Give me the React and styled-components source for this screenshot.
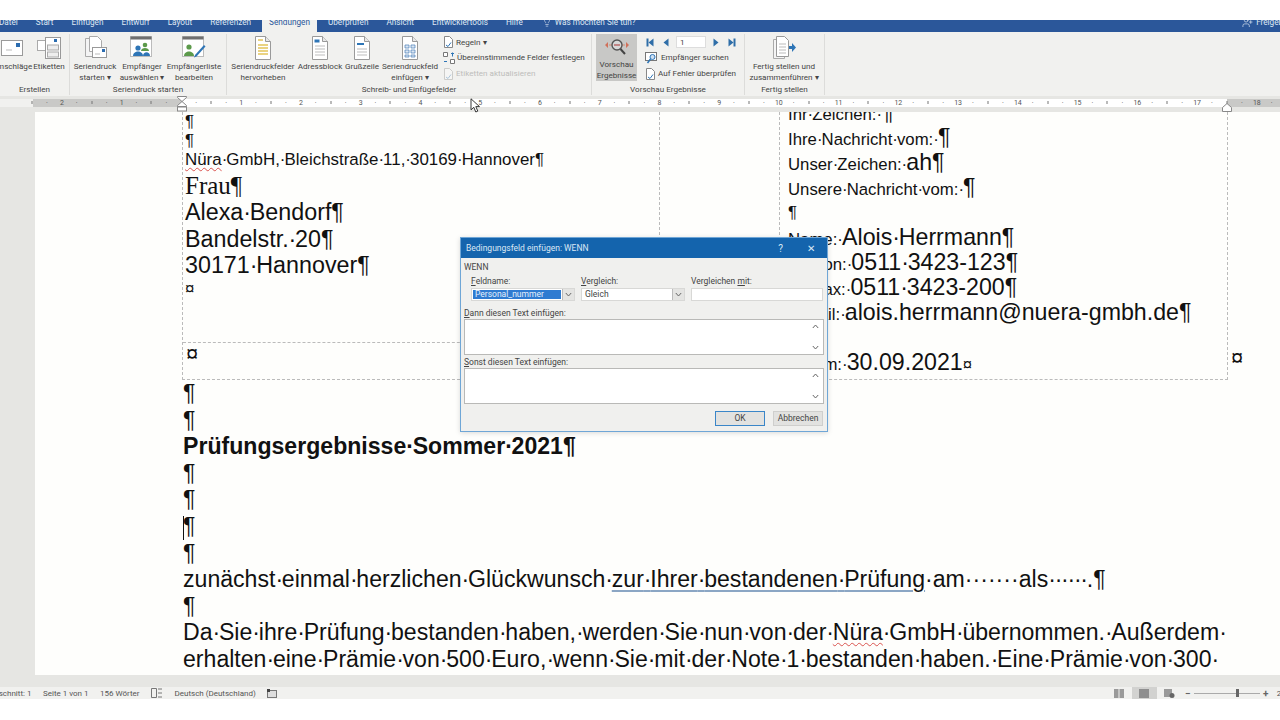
import styled, { createGlobalStyle } from 'styled-components';
import { Lightbulb, UserPlus } from 'lucide-react';

const GlobalStyle = createGlobalStyle`
  html, body { margin: 0; padding: 0; background: #fff; }
  #root { width: 1280px; height: 720px; overflow: hidden; }
`;

const uiFont = `Roboto, "Noto Sans", sans-serif`;
const docFont = `"Liberation Sans", Arial, sans-serif`;

const Sheet = ({ w = 18, h = 24, lines = 3, children }) => (
  <svg width={w} height={h} viewBox="0 0 18 24">
    <path d="M1.5 .5h10l5 5v18h-15z" fill="#fff" stroke="#9a9a9a" />
    <path d="M11.5 .5v5h5" fill="#e8e8e8" stroke="#9a9a9a" />
    {Array.from({ length: lines }).map((_, i) => (
      <path key={i} d={`M4 ${10 + i * 3}h10`} stroke="#bdbdbd" />
    ))}
    {children}
  </svg>
);

const EnvelopeIcon = () => (
  <svg width="22" height="16" viewBox="0 0 22 16">
    <rect x=".5" y=".5" width="21" height="15" fill="#fff" stroke="#9a9a9a" />
    <path d="M5 10h6" stroke="#bbb" />
    <rect x="15" y="3" width="4" height="4" fill="#2b6cb0" />
  </svg>
);

const LabelsIcon = () => (
  <svg width="24" height="22" viewBox="0 0 24 22">
    <rect x=".5" y="3.500" width="14" height="10" fill="#fff" stroke="#aaa" />
    <rect x="8.500" y=".5" width="15" height="21" fill="#fff" stroke="#999" />
    <rect x="17" y="2" width="3" height="3" fill="#2b6cb0" />
    <rect x="10.500" y="8" width="11" height="5" fill="#eee" stroke="#aaa" />
    <rect x="10.500" y="15" width="11" height="5" fill="#eee" stroke="#aaa" />
  </svg>
);

const MergeIcon = () => (
  <svg width="24" height="24" viewBox="0 0 24 24">
    <path d="M2.500 2.500h8l4 4v14h-12z" fill="#f4f4f4" stroke="#aaa" />
    <path d="M6.500 .5h8l4 4v11h-12z" fill="#fff" stroke="#aaa" />
    <rect x="9.500" y="11.500" width="14" height="10" fill="#fff" stroke="#999" />
    <rect x="19" y="13" width="3" height="3" fill="#2b6cb0" />
    <path d="M12 18h5" stroke="#bbb" />
  </svg>
);

const PeopleIcon = ({ pen }) => (
  <svg width="24" height="24" viewBox="0 0 24 24">
    <rect x=".5" y=".5" width="21" height="20" fill="#fff" stroke="#bbb" />
    <rect x=".5" y=".5" width="21" height="3" fill="#6f6f6f" />
    {pen ? (
      <>
        <circle cx="7" cy="11" r="2.600" fill="#5c9a4b" />
        <path d="M2 20c0-6 10-6 10 0z" fill="#5c9a4b" />
        <path d="M13 19l9-10 1.500 1.500-9 10-2.500 1z" fill="#2e75b6" />
      </>
    ) : (
      <>
        <circle cx="15" cy="9" r="2.300" fill="#5c9a4b" />
        <path d="M11 15c0-4 8-4 8 0z" fill="#5c9a4b" />
        <circle cx="8" cy="12" r="2.600" fill="#2e75b6" />
        <path d="M3 20c0-6 10-6 10 0z" fill="#2e75b6" />
        <path d="M13 20c0-5 7-5 7 0z" fill="#2e75b6" />
      </>
    )}
  </svg>
);

const HighlightIcon = () => (
  <Sheet lines={0}>
    <path d="M4 4h5M4 9h10M4 12h10M4 15h10M4 18h10" stroke="#e3c55a" strokeWidth="1.500" />
  </Sheet>
);

const BlockIcon = () => (
  <Sheet lines={4}>
    <path d="M3.500 3.500h5v3h-5z" fill="#2e75b6" />
  </Sheet>
);

const GreetingIcon = () => (
  <Sheet lines={0}>
    <path d="M4 8h7" stroke="#2e75b6" strokeWidth="2" />
    <path d="M4 13h10M4 16h10M4 19h10" stroke="#bdbdbd" />
  </Sheet>
);

const FieldIcon = () => (
  <Sheet lines={0}>
    <path d="M4 9h4v3h-4zM10 9h4v3h-4zM4 14h4v3h-4zM10 14h4v3h-4zM4 19h4v2h-4zM10 19h4v2h-4z" fill="#dbe6f3" stroke="#4b7fb8" strokeWidth=".7" />
  </Sheet>
);

const FinishIcon = () => (
  <svg width="24" height="24" viewBox="0 0 24 24">
    <path d="M1.500 3.500h8l3 3v16h-11z" fill="#f4f4f4" stroke="#aaa" />
    <path d="M4.500 .5h8l4 4v16h-12z" fill="#fff" stroke="#999" />
    <path d="M7 8h7M7 11h7M7 14h7M7 17h7" stroke="#bbb" />
    <path d="M17 10h3V7l4 4.500-4 4.500v-3h-3z" fill="#2e75b6" />
  </svg>
);

const PreviewIcon = () => (
  <svg width="26" height="18" viewBox="0 0 26 18">
    <path d="M1 7l3-3v6zM25 7l-3-3v6z" fill="#d0705a" />
    <path d="M5 7h3M18 7h3" stroke="#d0a090" strokeWidth="1.500" />
    <circle cx="13" cy="7" r="5" fill="#d8d8d8" stroke="#555" strokeWidth="1.400" />
    <path d="M10 7h6" stroke="#a33" />
    <path d="M16.500 11l4.500 5" stroke="#444" strokeWidth="2" />
  </svg>
);

const SmallDoc = ({ mark, faded }) => (
  <svg width="11" height="12" viewBox="0 0 11 12" opacity={faded ? 0.35 : 1}>
    <path d="M1.500 .5h5l3 3v8h-8z" fill="#fff" stroke="#888" />
    <path d="M3 9l2 1.500 3-4" fill="none" stroke={mark} />
  </svg>
);

const MatchIcon = () => (
  <svg width="12" height="12" viewBox="0 0 12 12">
    <path d="M.5 .5h4v4h-4zM7.500 7.500h4v4h-4z" fill="#fff" stroke="#777" />
    <path d="M8 1.500h3M9.500 .5v4M1 9.500h3" stroke="#2e75b6" />
  </svg>
);

const FindIcon = () => (
  <svg width="14" height="12" viewBox="0 0 14 12">
    <rect x=".5" y=".5" width="11" height="8" fill="#fff" stroke="#777" />
    <circle cx="7.500" cy="5" r="2.500" fill="#cfe0f2" stroke="#2e75b6" />
    <path d="M5.500 7l-3 4" stroke="#2e75b6" strokeWidth="1.500" />
  </svg>
);

const NavIcon = ({ dir, bar }) => (
  <svg width="9" height="9" viewBox="0 0 9 9">
    <path d={dir === 'left' ? 'M7.500 .5v8l-5-4z' : 'M1.500 .5v8l5-4z'} fill="#2f6ea8" />
    {bar && <path d={dir === 'left' ? 'M.5 .5h2v8h-2z' : 'M6.500 .5h2v8h-2z'} fill="#2f6ea8" />}
  </svg>
);

const Chevron = ({ up }) => (
  <svg width="7" height="5" viewBox="0 0 7 5">
    <path d={up ? 'M.8 4l2.700-3 2.700 3' : 'M.8 1l2.700 3 2.700-3'} fill="none" stroke="#666" />
  </svg>
);

// Word draws the space marker narrower than a real middle dot
const Tx = ({ children }) =>
  children.split('·').flatMap((part, i) => (i === 0 ? [part] : [<Dot key={i}>·</Dot>, part]));

const tabs = ['Datei', 'Start', 'Einfügen', 'Entwurf', 'Layout', 'Referenzen', 'Sendungen', 'Überprüfen', 'Ansicht', 'Entwicklertools', 'Hilfe'];

const rulerMarks = ['bar', 'dot', '2', 'dot', 'bar', 'dot', '1', 'dot', 'bar', 'dot', ''];
for (let n = 1; n <= 19; n += 1) rulerMarks.push('dot', 'bar', 'dot', String(n));

const App = () => (
  <>
    <GlobalStyle />
    <Screen>
      <TopGap />
      <TabBar>
        <TabList>
          {tabs.map((t) => (
            <Tab key={t} $active={t === 'Sendungen'}>{t}</Tab>
          ))}
          <TellMe>
            <Lightbulb size={10} strokeWidth={1.5} />
            Was möchten Sie tun?
          </TellMe>
        </TabList>
        <Share>
          <UserPlus size={11} strokeWidth={1.5} />
          Freigeben
        </Share>
      </TabBar>

      <Ribbon>
        <Group $w={78}>
          <GroupBody>
            <BigButton $w={40}><IconSlot><EnvelopeIcon /></IconSlot><span>Umschläge</span></BigButton>
            <BigButton $w={34}><IconSlot><LabelsIcon /></IconSlot><span>Etiketten</span></BigButton>
          </GroupBody>
          <GroupLabel $shift={8}>Erstellen</GroupLabel>
        </Group>
        <Group $w={157}>
          <GroupBody>
            <BigButton $w={50}><IconSlot><MergeIcon /></IconSlot><span>Seriendruck<br />starten ▾</span></BigButton>
            <BigButton $w={44}><IconSlot><PeopleIcon /></IconSlot><span>Empfänger<br />auswählen ▾</span></BigButton>
            <BigButton $w={60}><IconSlot><PeopleIcon pen /></IconSlot><span>Empfängerliste<br />bearbeiten</span></BigButton>
          </GroupBody>
          <GroupLabel>Seriendruck starten</GroupLabel>
        </Group>
        <Group $w={365}>
          <GroupBody>
            <BigButton $w={72}><IconSlot><HighlightIcon /></IconSlot><span>Seriendruckfelder<br />hervorheben</span></BigButton>
            <BigButton $w={42}><IconSlot><BlockIcon /></IconSlot><span>Adressblock</span></BigButton>
            <BigButton $w={42}><IconSlot><GreetingIcon /></IconSlot><span>Grußzeile</span></BigButton>
            <BigButton $w={54}><IconSlot><FieldIcon /></IconSlot><span>Seriendruckfeld<br />einfügen ▾</span></BigButton>
            <SmallColumn $gap={6}>
              <SmallButton><SmallDoc mark="#2e75b6" />Regeln ▾</SmallButton>
              <SmallButton><MatchIcon />Übereinstimmende Felder festlegen</SmallButton>
              <SmallButton $disabled><SmallDoc mark="#2e75b6" faded />Etiketten aktualisieren</SmallButton>
            </SmallColumn>
          </GroupBody>
          <GroupLabel>Schreib- und Einfügefelder</GroupLabel>
        </Group>
        <Group $w={153}>
          <GroupBody>
            <ActiveButton><IconSlot><PreviewIcon /></IconSlot><span>Vorschau<br />Ergebnisse</span></ActiveButton>
            <SmallColumn $gap={8}>
              <NavRow>
                <NavIcon dir="left" bar />
                <NavIcon dir="left" />
                <NavInput>1</NavInput>
                <NavIcon dir="right" />
                <NavIcon dir="right" bar />
              </NavRow>
              <SmallButton><FindIcon />Empfänger suchen</SmallButton>
              <SmallButton><SmallDoc mark="#2e75b6" />Auf Fehler überprüfen</SmallButton>
            </SmallColumn>
          </GroupBody>
          <GroupLabel>Vorschau Ergebnisse</GroupLabel>
        </Group>
        <Group $w={80}>
          <GroupBody>
            <BigButton $w={78}><IconSlot><FinishIcon /></IconSlot><span>Fertig stellen und<br />zusammenführen ▾</span></BigButton>
          </GroupBody>
          <GroupLabel>Fertig stellen</GroupLabel>
        </Group>
      </Ribbon>

      <Ruler>
        <RulerStrip>
          {rulerMarks.map((m, i) => (
            <RulerMark key={i}>
              {m === 'bar' ? <RulerBar /> : m === 'dot' ? '·' : m}
            </RulerMark>
          ))}
        </RulerStrip>
        <IndentMarker $x={176}>
          <svg width="12" height="16" viewBox="0 0 12 16">
            <path d="M1.500 .5h9v1l-4.500 4-4.500-4zM6 5.500l4.500 4v1h-9v-1z" fill="#fff" stroke="#888" />
            <rect x="1.500" y="11" width="9" height="4" fill="#fff" stroke="#888" />
          </svg>
        </IndentMarker>
        <IndentMarker $x={1221}>
          <svg width="12" height="16" viewBox="0 0 12 16">
            <path d="M1.500 15.500v-4l4.500-4 4.500 4v4z" fill="#fff" stroke="#888" />
          </svg>
        </IndentMarker>
      </Ruler>

      <DocArea>
        <Page>
          <HeaderTable>
            <AddressCell>
              <AddressTop>
                <Line>¶</Line>
                <Line>¶</Line>
                <Line><Misspelled>Nüra</Misspelled><Tx>·GmbH,·Bleichstraße·11,·30169·Hannover¶</Tx></Line>
                <AddressLine $serif $first>Frau¶</AddressLine>
                <AddressLine><Tx>Alexa·Bendorf¶</Tx></AddressLine>
                <AddressLine><Tx>Bandelstr.·20¶</Tx></AddressLine>
                <AddressLine><Tx>30171·Hannover¶</Tx></AddressLine>
                <Line>¤</Line>
              </AddressTop>
              <AddressBottom><CellMark>¤</CellMark></AddressBottom>
            </AddressCell>
            <GapCell />
            <InfoCell>
              <InfoLine><Tx>Ihr·Zeichen:·</Tx><Big>¶</Big></InfoLine>
              <InfoLine><Tx>Ihre·Nachricht·vom:·</Tx><Big>¶</Big></InfoLine>
              <InfoLine><Tx>Unser·Zeichen:·</Tx><Big>ah¶</Big></InfoLine>
              <InfoLine><Tx>Unsere·Nachricht·vom:·</Tx><Big>¶</Big></InfoLine>
              <InfoLine>¶</InfoLine>
              <InfoLine><Tx>Name:·</Tx><Big><Tx>Alois·Herrmann¶</Tx></Big></InfoLine>
              <InfoLine><Tx>Telefon:·</Tx><Big><Tx>0511·3423-123¶</Tx></Big></InfoLine>
              <InfoLine><Tx>Telefax:·</Tx><Big><Tx>0511·3423-200¶</Tx></Big></InfoLine>
              <InfoLine><Tx>E-Mail:·</Tx><Big>alois.herrmann@nuera-gmbh.de¶</Big></InfoLine>
              <InfoLine />
              <InfoLine><Tx>Datum:·</Tx><Big>30.09.2021</Big>¤</InfoLine>
            </InfoCell>
            <RowEnd>¤</RowEnd>
          </HeaderTable>
          <div>
            <BodyLine>¶</BodyLine>
            <BodyLine>¶</BodyLine>
            <BodyLine $bold><Tx>Prüfungsergebnisse·Sommer·2021¶</Tx></BodyLine>
            <BodyLine>¶</BodyLine>
            <BodyLine>¶</BodyLine>
            <BodyLine $caret>¶</BodyLine>
            <BodyLine>¶</BodyLine>
            <BodyLine>
              <Tx>zunächst·einmal·herzlichen·Glückwunsch·</Tx>
              <Grammar><Tx>zur·Ihrer·bestandenen·Prüfung</Tx></Grammar>
              ·am·······als<Tx>······</Tx>.¶
            </BodyLine>
            <BodyLine>¶</BodyLine>
            <BodyLine>
              <Tx>Da·Sie·ihre·Prüfung·bestanden·haben,·werden·Sie·nun·von·der·</Tx>
              <Misspelled>Nüra</Misspelled>
              <Tx>·GmbH·übernommen.·Außerdem·</Tx>
            </BodyLine>
            <BodyLine><Tx>erhalten·eine·Prämie·von·500·Euro,·wenn·Sie·mit·der·Note·1·bestanden·haben.·Eine·Prämie·von·300·</Tx></BodyLine>
          </div>
        </Page>
      </DocArea>

      <StatusBar>
        <StatusLeft>
          <StatusText>Abschnitt: 1</StatusText>
          <StatusText>Seite 1 von 1</StatusText>
          <StatusText>156 Wörter</StatusText>
          <svg width="12" height="10" viewBox="0 0 12 10">
            <path d="M.5.5h5v9h-5zM7 1h4M7 5h4M7 9h4" fill="none" stroke="#777" />
          </svg>
          <StatusText>Deutsch (Deutschland)</StatusText>
          <svg width="10" height="9" viewBox="0 0 10 9">
            <rect x=".5" y="1.500" width="9" height="7" fill="#ddd" stroke="#777" />
            <rect x="0" y="0" width="3" height="3" fill="#444" />
          </svg>
        </StatusLeft>
        <StatusRight>
          <ViewButton>
            <svg width="10" height="9" viewBox="0 0 10 9"><path d="M0 0h4.500v9H0zM5.500 0H10v9H5.500z" fill="#9a9a9a" /></svg>
          </ViewButton>
          <ViewButton $active>
            <svg width="10" height="9" viewBox="0 0 10 9"><rect width="10" height="9" fill="#8f8f8f" /></svg>
          </ViewButton>
          <ViewButton>
            <svg width="11" height="9" viewBox="0 0 11 9"><rect width="8" height="8" fill="#9a9a9a" /><circle cx="8" cy="6.500" r="2.500" fill="#666" /></svg>
          </ViewButton>
          <ZoomSign>−</ZoomSign>
          <ZoomTrack><ZoomThumb /></ZoomTrack>
          <ZoomSign>+</ZoomSign>
          <ZoomValue>204 %</ZoomValue>
        </StatusRight>
      </StatusBar>

      <Dialog>
        <DialogTitle>
          <span>Bedingungsfeld einfügen: WENN</span>
          <DialogControls>
            <span>?</span>
            <span>✕</span>
          </DialogControls>
        </DialogTitle>
        <DialogBody>
          <DialogLabel>WENN</DialogLabel>
          <FieldRow>
            <Field>
              <DialogLabel><u>F</u>eldname:</DialogLabel>
              <Combo>
                <ComboValue $selected>Personal_nummer</ComboValue>
                <ComboArrow><Chevron /></ComboArrow>
              </Combo>
            </Field>
            <Field>
              <DialogLabel><u>V</u>ergleich:</DialogLabel>
              <Combo>
                <ComboValue>Gleich</ComboValue>
                <ComboArrow><Chevron /></ComboArrow>
              </Combo>
            </Field>
            <Field>
              <DialogLabel>Vergleichen <u>m</u>it:</DialogLabel>
              <Combo><ComboValue /></Combo>
            </Field>
          </FieldRow>
          <SectionLabel><u>D</u>ann diesen Text einfügen:</SectionLabel>
          <TextBox>
            <ScrollArrows><Chevron up /><Chevron /></ScrollArrows>
          </TextBox>
          <SectionLabel><u>S</u>onst diesen Text einfügen:</SectionLabel>
          <TextBox>
            <ScrollArrows><Chevron up /><Chevron /></ScrollArrows>
          </TextBox>
          <DialogButtons>
            <DialogButton $primary>OK</DialogButton>
            <DialogButton>Abbrechen</DialogButton>
          </DialogButtons>
        </DialogBody>
      </Dialog>

      <MouseCursor>
        <svg width="11" height="15" viewBox="0 0 11 15">
          <path d="M1 .8v11l2.800-2.500 2 4.700 2-.9-2-4.500h3.700z" fill="#fff" stroke="#222" strokeWidth=".9" />
        </svg>
      </MouseCursor>
    </Screen>
  </>
);

const Screen = styled.div`
  position: relative;
  display: flex;
  flex-direction: column;
  width: 1280px;
  height: 720px;
  overflow: hidden;
  background: #fff;
  font-family: ${uiFont};
`;

const TopGap = styled.div`
  height: 20px;
  flex: none;
`;

const TabBar = styled.div`
  display: flex;
  justify-content: space-between;
  height: 12px;
  flex: none;
  overflow: hidden;
  background: #2b579a;
  color: #dfe7f2;
  font-size: 8.200px;
`;

const TabList = styled.div`
  display: flex;
  height: 12px;
  margin-left: -10px;
`;

const Tab = styled.div`
  height: 12px;
  padding: 0 ${(p) => (p.$active ? '7px' : '9px')};
  margin: 0 ${(p) => (p.$active ? '2px' : '0')};
  line-height: 4px;
  white-space: nowrap;
  background: ${(p) => (p.$active ? '#f1f1ef' : 'transparent')};
  color: ${(p) => (p.$active ? '#2b579a' : 'inherit')};
`;

const TellMe = styled.div`
  display: flex;
  gap: 3px;
  margin-left: 10px;
  line-height: 4px;
  white-space: nowrap;

  svg {
    margin-top: -3px;
  }
`;

const Share = styled.div`
  display: flex;
  gap: 3px;
  margin-right: -12px;
  line-height: 4px;
  white-space: nowrap;

  svg {
    margin-top: -3px;
  }
`;

const Ribbon = styled.div`
  display: flex;
  height: 64px;
  flex: none;
  margin-left: -8px;
  background: #f1f1ef;
  color: #444;
  font-size: 8.100px;
  line-height: 11px;
`;

const Group = styled.div`
  display: flex;
  flex-direction: column;
  flex: 0 0 ${(p) => p.$w}px;
  min-width: 0;
  box-sizing: border-box;
  margin: 2px 0 1px;
  border-right: 1px solid #dcdcda;
`;

const GroupBody = styled.div`
  display: flex;
  flex: 1;
  min-height: 0;
`;

const GroupLabel = styled.div`
  height: 11px;
  padding-left: ${(p) => p.$shift || 0}px;
  text-align: center;
  white-space: nowrap;
`;

const BigButton = styled.div`
  display: flex;
  flex-direction: column;
  align-items: center;
  flex: 0 0 ${(p) => p.$w}px;
  min-width: 0;
  text-align: center;
  white-space: nowrap;
`;

const ActiveButton = styled(BigButton)`
  flex: 0 0 41px;
  height: 47px;
  margin-left: 4px;
  background: #c8c8c6;
`;

const IconSlot = styled.div`
  display: flex;
  align-items: center;
  justify-content: center;
  height: 25px;
  margin: 1px 0;
`;

const SmallColumn = styled.div`
  display: flex;
  flex-direction: column;
  gap: 3.800px;
  margin-left: ${(p) => p.$gap}px;
  padding-top: 2px;
  white-space: nowrap;
`;

const SmallButton = styled.div`
  display: flex;
  align-items: center;
  gap: 2px;
  height: 12px;
  color: ${(p) => (p.$disabled ? '#bdbdbb' : 'inherit')};
`;

const NavRow = styled.div`
  display: flex;
  align-items: center;
  gap: 6px;
  height: 12px;
  padding-left: 1px;
`;

const NavInput = styled.div`
  width: 30px;
  height: 12px;
  padding-left: 3px;
  box-sizing: border-box;
  background: #fff;
  border: 1px solid #ddd;
  line-height: 10px;
`;

const Ruler = styled.div`
  position: relative;
  height: 16px;
  flex: none;
  padding-top: 3px;
  box-sizing: border-box;
  background: #e6e6e3;
`;

const RulerStrip = styled.div`
  display: flex;
  height: 8px;
  overflow: hidden;
  background: linear-gradient(
    to right,
    #f1f1ef 33px,
    #c9c9c7 33px,
    #c9c9c7 182px,
    #fff 182px,
    #fff 1227px,
    #c9c9c7 1227px
  );
  color: #555;
  font-size: 7px;
  line-height: 8px;
`;

const RulerMark = styled.div`
  flex: 0 0 14.940px;
  text-align: center;
  transform: translateX(24.500px);
`;

const RulerBar = styled.i`
  display: inline-block;
  width: 1px;
  height: 3px;
  background: #777;
  vertical-align: 1px;
`;

const IndentMarker = styled.div`
  position: absolute;
  top: 0;
  left: ${(p) => p.$x}px;
  line-height: 0;
`;

const DocArea = styled.div`
  flex: none;
  height: 575px;
  padding-left: 35px;
  box-sizing: border-box;
  background: #e6e6e3;
`;

const Page = styled.div`
  height: 563px;
  padding-left: 148px;
  box-sizing: border-box;
  overflow: hidden;
  background: #fefefc;
  color: #111;
  font-family: ${docFont};
  font-size: 23.100px;
`;

const Dot = styled.span`
  letter-spacing: -0.055em;
`;

const HeaderTable = styled.div`
  display: grid;
  grid-template-columns: 478px 119px 449px 20px;
  height: 268px;
  margin-left: -1px;
`;

const AddressCell = styled.div`
  display: flex;
  flex-direction: column;
  border: 1px dashed #bbb;
  border-width: 0 1px 1px 1px;
`;

const AddressTop = styled.div`
  height: 230px;
  padding-left: 2px;
  border-bottom: 1px dashed #bbb;
`;

const AddressBottom = styled.div`
  padding: 1px 0 0 3px;
`;

const Line = styled.div`
  height: 19px;
  font-size: 16.900px;
  line-height: 19px;
  white-space: nowrap;
`;

const CellMark = styled(Line)`
  font-size: 22px;
`;

const AddressLine = styled.div`
  height: 26.500px;
  margin-top: ${(p) => (p.$first ? '3.500px' : '0')};
  font-family: ${(p) => (p.$serif ? '"Liberation Serif", serif' : docFont)};
  font-size: ${(p) => (p.$serif ? '25px' : '23.300px')};
  line-height: 26.500px;
  white-space: nowrap;
`;

const GapCell = styled.div`
  border-bottom: 1px dashed #bbb;
`;

const InfoCell = styled.div`
  height: 267px;
  padding-left: 8px;
  overflow: hidden;
  border: 1px dashed #bbb;
  border-width: 0 1px 1px 1px;
`;

const InfoLine = styled.div`
  height: 25px;
  font-size: 16.750px;
  line-height: 25px;
  white-space: nowrap;

  &:first-child {
    margin-top: -12.500px;
  }
`;

const Big = styled.span`
  font-size: 23.200px;
`;

const RowEnd = styled.div`
  align-self: end;
  padding: 0 0 13px 3px;
  font-size: 22px;
  line-height: 19px;
`;

const BodyLine = styled.div`
  position: relative;
  height: 26.600px;
  font-weight: ${(p) => (p.$bold ? 700 : 400)};
  line-height: 26.600px;
  white-space: nowrap;

  ${(p) =>
    p.$caret &&
    `&::before {
      content: '';
      position: absolute;
      left: 0;
      top: 3px;
      width: 1px;
      height: 24px;
      background: #111;
    }`}
`;

const Misspelled = styled.span`
  text-decoration: underline wavy #d9534f 1px;
  text-underline-offset: 2px;
`;

const Grammar = styled.span`
  text-decoration: underline #8ba6c4 2px;
  text-underline-offset: 3px;
`;

const StatusBar = styled.div`
  display: flex;
  justify-content: space-between;
  align-items: center;
  flex: none;
  height: 12px;
  background: #f1f1ef;
  color: #555;
  font-size: 8px;
`;

const StatusLeft = styled.div`
  display: flex;
  align-items: center;
  gap: 11.500px;
  margin-left: -11px;
`;

const StatusText = styled.span`
  white-space: nowrap;
`;

const StatusRight = styled.div`
  display: flex;
  align-items: center;
  margin-right: -18px;
`;

const ViewButton = styled.div`
  display: flex;
  align-items: center;
  justify-content: center;
  width: 25px;
  height: 12px;
  background: ${(p) => (p.$active ? '#d2d2d0' : 'transparent')};
`;

const ZoomSign = styled.span`
  width: 12px;
  text-align: center;
  font-size: 10px;
  font-weight: 700;
  color: #666;
`;

const ZoomTrack = styled.div`
  position: relative;
  width: 66px;
  height: 1px;
  background: #aaa;
`;

const ZoomThumb = styled.div`
  position: absolute;
  top: -4px;
  left: 42px;
  width: 3px;
  height: 8px;
  background: #666;
`;

const ZoomValue = styled(StatusText)`
  margin-left: 5px;
`;

const Dialog = styled.div`
  position: absolute;
  top: 237px;
  left: 460px;
  width: 368px;
  box-sizing: border-box;
  background: #f0f0ee;
  border: 1px solid #6fa6d6;
  box-shadow: 0 1px 5px rgba(0, 0, 0, 0.15);
  color: #444;
  font-size: 8.500px;
`;

const DialogTitle = styled.div`
  display: flex;
  justify-content: space-between;
  align-items: center;
  height: 20px;
  padding: 0 12px 0 5px;
  background: #1464ad;
  color: #dbe8f5;
`;

const DialogControls = styled.div`
  display: flex;
  gap: 24px;
  font-size: 10px;
`;

const DialogBody = styled.div`
  display: flex;
  flex-direction: column;
  padding: 4px 3px 5px;
`;

const DialogLabel = styled.div`
  height: 10px;
  line-height: 10px;
  white-space: nowrap;
`;

const FieldRow = styled.div`
  display: grid;
  grid-template-columns: 104px 104px 132px;
  gap: 6px;
  margin: 4px 0 0 7px;
`;

const Field = styled.div`
  display: flex;
  flex-direction: column;
  gap: 2px;
`;

const Combo = styled.div`
  display: flex;
  height: 13px;
  background: #fff;
  border: 1px solid #d8d8d6;
  box-sizing: border-box;
`;

const ComboValue = styled.div`
  flex: 1;
  padding-left: 2px;
  margin: 1px;
  line-height: 9px;
  background: ${(p) => (p.$selected ? '#2f7bd1' : 'transparent')};
  color: ${(p) => (p.$selected ? '#e6f0fb' : 'inherit')};
`;

const ComboArrow = styled.div`
  display: flex;
  align-items: center;
  justify-content: center;
  width: 11px;
  background: #e4e4e2;
  border-left: 1px solid #bbb;
`;

const SectionLabel = styled(DialogLabel)`
  margin-top: 7px;

  & ~ & {
    margin-top: 2px;
  }
`;

const TextBox = styled.div`
  display: flex;
  justify-content: flex-end;
  width: 360px;
  height: 36px;
  margin-top: 1px;
  box-sizing: border-box;
  background: #fff;
  border: 1px solid #b9b9b7;
`;

const ScrollArrows = styled.div`
  display: flex;
  flex-direction: column;
  justify-content: space-between;
  align-items: center;
  width: 15px;
  padding: 4px 0;
`;

const DialogButtons = styled.div`
  display: flex;
  justify-content: flex-end;
  gap: 8px;
  margin: 7px 1px 0 0;
`;

const DialogButton = styled.div`
  width: 50px;
  height: 15px;
  line-height: 13px;
  box-sizing: border-box;
  text-align: center;
  background: #e2e2e0;
  border: ${(p) => (p.$primary ? '1.500px solid #3a86c8' : '1px solid #cfcfcd')};
`;

const MouseCursor = styled.div`
  position: absolute;
  top: 98px;
  left: 470px;
  line-height: 0;
`;

export default App;
